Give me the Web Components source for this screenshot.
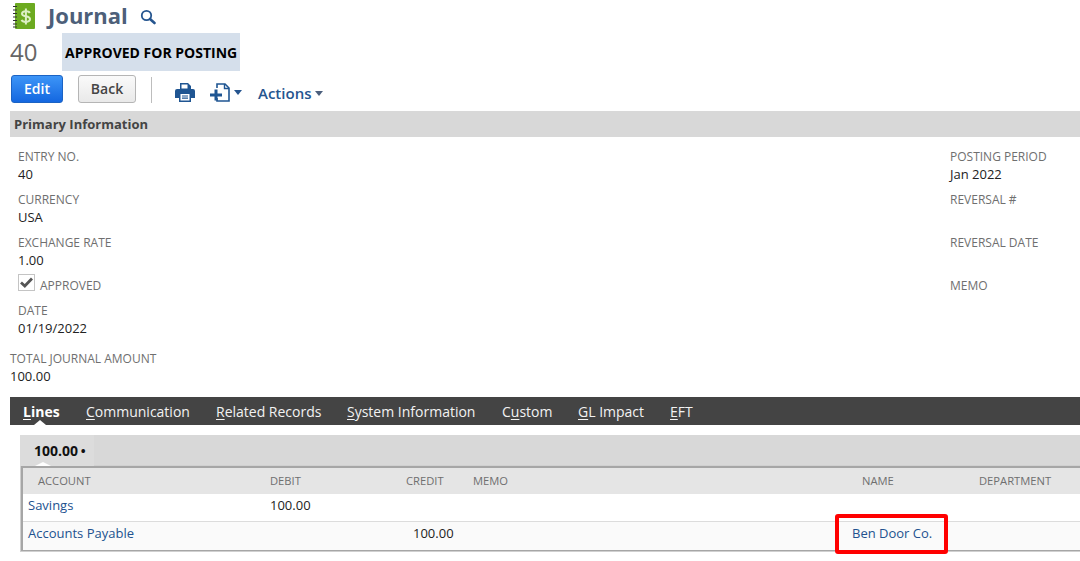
<!DOCTYPE html>
<html><head><meta charset="utf-8"><title>Journal</title>
<style>
html,body{margin:0;padding:0;background:#fff;overflow:hidden}
body{width:1080px;height:561px;font-family:"Open Sans","Liberation Sans",sans-serif;color:#222}
</style></head><body>
<ns-page>
  <ns-title slot="title">Journal</ns-title>
  <ns-status slot="status" num="40">APPROVED FOR POSTING</ns-status>
  <ns-toolbar slot="toolbar"></ns-toolbar>
  <ns-section slot="section">Primary Information</ns-section>
  <ns-fields slot="fields">
    <div slot="left">
      <ns-field label="ENTRY NO.">40</ns-field>
      <ns-field label="CURRENCY">USA</ns-field>
      <ns-field label="EXCHANGE RATE">1.00</ns-field>
      <ns-check label="APPROVED"></ns-check>
      <ns-field label="DATE">01/19/2022</ns-field>
    </div>
    <div slot="right">
      <ns-field label="POSTING PERIOD">Jan 2022</ns-field>
      <ns-field label="REVERSAL #">&nbsp;</ns-field>
      <ns-field label="REVERSAL DATE">&nbsp;</ns-field>
      <ns-field label="MEMO">&nbsp;</ns-field>
    </div>
  </ns-fields>
  <ns-field slot="total" label="TOTAL JOURNAL AMOUNT" style="margin:0 0 4px 10px">100.00</ns-field>
  <ns-tabs slot="tabs"></ns-tabs>
  <ns-lines slot="lines"></ns-lines>
</ns-page>
<script>
function def(name, css, html){
  customElements.define(name, class extends HTMLElement{
    constructor(){super();const r=this.attachShadow({mode:'open'});
      r.innerHTML='<style>'+css+'</style>'+(typeof html==='function'?html(this):html);}
  });
}
def('ns-page',':host{display:flex;flex-direction:column;width:1080px;height:561px;overflow:hidden}',
 '<slot name="title"></slot><slot name="status"></slot><slot name="toolbar"></slot><slot name="section"></slot><slot name="fields"></slot><slot name="total"></slot><slot name="tabs"></slot><slot name="lines"></slot>');

def('ns-title',`:host{display:flex;align-items:center;height:33px;padding-left:13px;box-sizing:border-box}
 svg{display:block}
 h1{margin:0 0 0 12px;font:700 22px/33px "Open Sans",sans-serif;color:#4d5f79;position:relative;top:-1px}
 .s{margin-left:12px;margin-top:1px}`,
 `<svg width="23" height="27" viewBox="0 0 23 27" style="margin-top:-1px">
   <rect x="2" y="0" width="20" height="26" rx="1" fill="#6caa20"/>
   <path d="M0 3.500h4M0 7h4M0 10.500h4M0 14h4M0 17.500h4M0 21h4M0 24h4" fill="none" stroke="#333" stroke-width="1.200"/>
   <path d="M16.800 10c-.5-1.200-1.800-1.800-4-1.800-2.300 0-3.800.8-3.800 2.500 0 3.600 8 1.600 8 5.400 0 1.800-1.700 2.800-4.100 2.800-2.200 0-3.800-.8-4.300-2.100" fill="none" stroke="#dcefc4" stroke-width="2"/>
   <path d="M12.900 5.500v16" stroke="#dcefc4" stroke-width="2"/>
  </svg>
  <h1><slot></slot></h1>
  <svg class="s" width="16" height="16" viewBox="0 0 16 16"><circle cx="6.500" cy="6.500" r="4.700" fill="none" stroke="#25558f" stroke-width="1.800"/><path d="M10 10l4.500 4" stroke="#25558f" stroke-width="2.600" stroke-linecap="round"/></svg>`);

def('ns-status',`:host{display:flex;align-items:center;height:38px;padding-left:10px}
 .n{width:52px;font:400 24px/38px "Open Sans",sans-serif;color:#666}
 .b{height:38px;width:178px;box-sizing:border-box;padding-left:3px;background:#d5dfeb;color:#000;font:700 14px/40px "Open Sans",sans-serif;white-space:nowrap}`,
 el=>`<div class="n">${el.getAttribute('num')}</div><div class="b"><slot></slot></div>`);

def('ns-toolbar',`:host{display:flex;align-items:flex-start;height:40px;padding:4px 0 0 11px;box-sizing:border-box}
 .btn{box-sizing:border-box;height:28px;border-radius:3px;font:600 14px/26px "Open Sans",sans-serif;text-align:center}
 .edit{width:52px;background:linear-gradient(#3d95f7,#1467e0);border:1px solid #1b63c4;color:#fff}
 .back{width:58px;margin-left:15px;background:linear-gradient(#fafafa,#e9e9e9);border:1px solid #b5b5b5;color:#444}
 .sep{width:1px;height:26px;background:#bdbdbd;margin:2px 0 0 15px}
 svg{display:block}
 .p{margin:8px 0 0 23px}.n{margin:8px 0 0 15px}
 .car{width:0;height:0;border:4px solid transparent;border-top:5px solid #25558f;border-bottom:0}
 .c1{margin:15px 0 0 3px}
 .a{margin:8px 0 0 16px;font:600 15px/20px "Open Sans",sans-serif;color:#25558f}
 .c2{margin:16px 0 0 4px;border-top-color:#4b5f7d}`,
 `<div class="btn edit">Edit</div><div class="btn back">Back</div><div class="sep"></div>
 <svg class="p" width="20" height="19" viewBox="0 0 20 19"><path fill="#1f5592" d="M5 0h8l3 3v4H5zM2 6h16a2 2 0 0 1 2 2v7h-4v4H4v-4H0V8a2 2 0 0 1 2-2z"/><path fill="#fff" d="M6.500 1.500h6v4h-6zM5.500 11h9v6.500h-9z"/><path stroke="#1f5592" stroke-width="1.200" d="M7 13h6M7 15.200h6"/></svg>
 <svg class="n" width="21" height="19" viewBox="0 0 21 19"><path d="M7 5V1h8l4 4v13H7v-3" fill="none" stroke="#1f5592" stroke-width="1.600"/><path d="M14.500 1v4.500H19" fill="none" stroke="#1f5592" stroke-width="1.400"/><path d="M6 6.500v11M0 12h12" stroke="#1f5592" stroke-width="3"/></svg>
 <div class="car c1"></div>
 <div class="a">Actions</div><div class="car c2"></div>`);

def('ns-section',`:host{display:block;margin-left:10px;height:26px;background:#d8d8d8;padding-left:4px;font:700 13px/26px "Open Sans",sans-serif;color:#444}`,'<slot></slot>');

def('ns-fields',`:host{display:flex;justify-content:space-between;padding:11px 0 0 18px;height:213px;box-sizing:border-box}
 .r{width:130px}`,'<div><slot name="left"></slot></div><div class="r"><slot name="right"></slot></div>');

def('ns-field',`:host{display:block;height:43px;white-space:nowrap}
 .l{font:400 12px/17px "Open Sans",sans-serif;color:#6f6f6f}
 .v{font:400 13px/18px "Open Sans",sans-serif;color:#222}`,
 el=>`<div class="l">${el.getAttribute('label')}</div><div class="v"><slot></slot></div>`);

def('ns-check',`:host{display:flex;height:25px;white-space:nowrap}
 .b{width:17px;height:17px;margin-top:-3px;box-sizing:border-box;border:1px solid #c4c4c4;display:flex;align-items:center;justify-content:center}
 .l{font:400 12px/17px "Open Sans",sans-serif;color:#6f6f6f;margin:0 0 0 5px}`,
 el=>`<div class="b"><svg width="13" height="11" viewBox="0 0 13 11"><path d="M1 5.500l3.800 3.500L12 1.500" fill="none" stroke="#555" stroke-width="2.800"/></svg></div><div class="l">${el.getAttribute('label')}</div>`);

def('ns-tabs',`:host{display:flex;margin:0 0 0 10px;height:28px;background:#444;padding-left:13px;color:#f2f2f2;font:400 14px/29px "Open Sans",sans-serif;white-space:nowrap}
 span.t{display:block}
 u{text-underline-offset:2px}
 .on{font-weight:700;color:#fff;position:relative}
 .on::after{content:"";position:absolute;left:11px;bottom:0;border:6px solid transparent;border-bottom:5px solid #fff;border-top:0}`,
 `<span class="t on" style="width:63px"><u>L</u>ines</span><span class="t" style="width:130px"><u>C</u>ommunication</span><span class="t" style="width:131px"><u>R</u>elated Records</span><span class="t" style="width:155px"><u>S</u>ystem Information</span><span class="t" style="width:76px">C<u>u</u>stom</span><span class="t" style="width:92px"><u>G</u>L Impact</span><span class="t"><u>E</u>FT</span>`);

def('ns-lines',`:host{display:block;margin:10px 0 0 20px;position:relative}
 .bar{height:31px;background:#d8d8d8;display:flex}
 .sub{position:relative;width:74px;box-sizing:border-box;padding-left:14px;background:#dcdcdc;color:#111;font:700 14px/32px "Open Sans",sans-serif;white-space:nowrap}
 .sub span{font-size:13px;margin-left:-1px}
 .sub::after{content:"";position:absolute;left:15px;bottom:0;border:8px solid transparent;border-bottom:4px solid #fff;border-top:0}
 .tbl{margin-left:1px;border:2px solid #a6a6a6;border-right:0;outline:1px solid #d0d0d0;background:#fff;box-sizing:border-box;height:85px}
 .row{display:grid;grid-template-columns:247px 135px 50px 397px 127px 1fr;height:27px;font:400 13px/22px "Open Sans",sans-serif;color:#222;white-space:nowrap}
 .head{background:#e5e5e5;color:#6f6f6f;font-size:11.200px;line-height:25px;height:26px}
 .head>div:first-child{padding-left:15px}
 .row>div{box-sizing:border-box}
 .cell{padding-left:5px}
 a{color:#22528f;text-decoration:none}
 .alt{background:#fafafa;border-top:1px solid #dcdcdc;height:28px}
 .alt>div{line-height:22px}
 .mark{position:absolute;left:815px;top:79px;width:113px;height:40px;box-sizing:border-box;border:4px solid #f00;border-radius:3px}`,
 `<div class="bar"><div class="sub">100.00 <span>•</span></div></div>
 <div class="tbl">
  <div class="row head"><div>ACCOUNT</div><div>DEBIT</div><div style="margin-left:1px">CREDIT</div><div style="padding-left:18px">MEMO</div><div style="padding-left:10px">NAME</div><div>DEPARTMENT</div></div>
  <div class="row"><div class="cell"><a>Savings</a></div><div>100.00</div><div></div><div></div><div></div><div></div></div>
  <div class="row alt"><div class="cell"><a>Accounts Payable</a></div><div></div><div style="padding-left:8px">100.00</div><div></div><div><a>Ben Door Co.</a></div><div></div></div>
 </div>
 <div class="mark"></div>`);
</script>
</body></html>
